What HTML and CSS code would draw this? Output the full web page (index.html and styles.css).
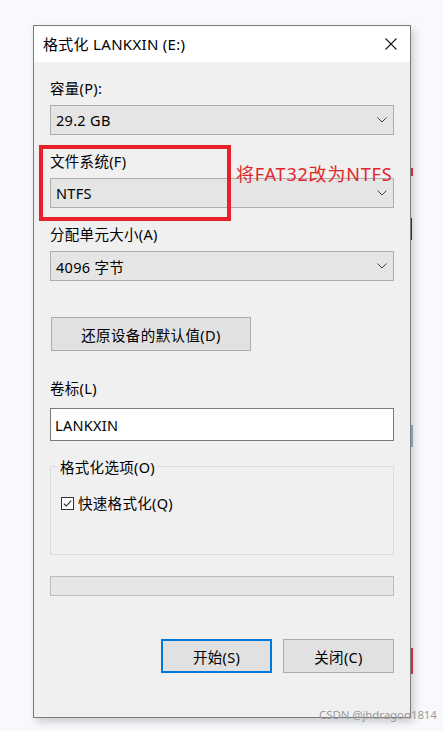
FILE: index.html
```html
<!DOCTYPE html>
<html lang="zh-CN">
<head>
<meta charset="utf-8">
<title>格式化 LANKXIN (E:)</title>
<link rel="stylesheet" href="styles.css">
</head>
<body>
<div class="stage">
  <div class="dialog">
    <div class="titlebar">
      <span class="title">格式化 LANKXIN (E:)</span>
      <svg class="close" width="12" height="12" viewBox="0 0 12 12"><path d="M0.5 0.5 L11.5 11.5 M11.5 0.5 L0.5 11.5" stroke="#1a1a1a" stroke-width="1.1" fill="none"/></svg>
    </div>
    <div class="content">
      <div class="label first">容量(P):</div>
      <div class="select"><span>29.2 GB</span><svg class="chev" width="10" height="6" viewBox="0 0 10 6"><path d="M0.5 0.5 L5 5 L9.5 0.5" stroke="#444" stroke-width="1" fill="none"/></svg></div>

      <div class="label">文件系统(F)</div>
      <div class="select"><span>NTFS</span><svg class="chev" width="10" height="6" viewBox="0 0 10 6"><path d="M0.5 0.5 L5 5 L9.5 0.5" stroke="#444" stroke-width="1" fill="none"/></svg></div>

      <div class="label">分配单元大小(A)</div>
      <div class="select"><span>4096 字节</span><svg class="chev" width="10" height="6" viewBox="0 0 10 6"><path d="M0.5 0.5 L5 5 L9.5 0.5" stroke="#444" stroke-width="1" fill="none"/></svg></div>

      <div class="restore">还原设备的默认值(D)</div>

      <div class="label vol">卷标(L)</div>
      <div class="textbox">LANKXIN</div>

      <div class="group">
        <span class="legend">格式化选项(O)</span>
        <div class="check-row">
          <svg class="checkbox" width="13" height="13" viewBox="0 0 13 13"><rect x="0.5" y="0.5" width="12" height="12" fill="#fff" stroke="#333"/><path d="M2.8 6.6 L5.2 9 L10.2 3.6" stroke="#222" stroke-width="1.1" fill="none"/></svg>
          <span>快速格式化(Q)</span>
        </div>
      </div>

      <div class="progress"></div>

      <div class="buttons">
        <div class="btn primary">开始(S)</div>
        <div class="btn">关闭(C)</div>
      </div>
    </div>

    <div class="redbox"></div>
    <div class="annot">将FAT32改为NTFS</div>
  </div>
  <div class="peek red1"></div>
  <div class="peek dark1"></div>
  <div class="peek dark2"></div>
  <div class="peek red2"></div>
  <div class="watermark">CSDN @jhdragon1814</div>
</div>
</body>
</html>
```

FILE: styles.css
```css
html, body {
  margin: 0;
  padding: 0;
  background: #f8f9fc;
  font-family: "Noto Sans", "Noto Sans CJK SC", sans-serif;
  color: #000;
}

.stage {
  position: relative;
  width: 443px;
  height: 731px;
  padding: 25px 0 0 33px;
  box-sizing: border-box;
}

.dialog {
  position: relative;
  width: 378px;
  height: 693px;
  box-sizing: border-box;
  border: 1px solid #7a7a7a;
  background: #f0f0f0;
  box-shadow: 3px 4px 8px rgba(0, 0, 0, 0.18);
}

.titlebar {
  height: 36px;
  background: #fff;
  display: flex;
  align-items: center;
  justify-content: space-between;
  padding: 0 13px 0 9px;
}

.title {
  font-size: 15px;
  line-height: 20px;
  letter-spacing: 0.3px;
}

.close {
  display: block;
}

.content {
  padding: 0 16px;
  display: flex;
  flex-direction: column;
}

.label {
  font-size: 14.5px;
  line-height: 20px;
  height: 20px;
  margin-top: 16px;
  margin-bottom: 7px;
  letter-spacing: 0.3px;
}

.select {
  height: 30px;
  box-sizing: border-box;
  border: 1px solid #adadad;
  background: #e5e5e5;
  display: flex;
  align-items: center;
  justify-content: space-between;
  padding: 0 6px 0 5px;
  font-size: 14.5px;
  letter-spacing: 0.3px;
}

.restore {
  align-self: flex-start;
  margin-left: 1px;
  margin-top: 36px;
  width: 200px;
  height: 34px;
  box-sizing: border-box;
  border: 1px solid #adadad;
  background: #e1e1e1;
  display: flex;
  align-items: center;
  justify-content: center;
  font-size: 14.5px;
  letter-spacing: 0.4px;
}

.label.vol {
  margin-top: 27px;
  margin-bottom: 10px;
}

.textbox {
  height: 33px;
  box-sizing: border-box;
  border: 1px solid #7a7a7a;
  background: #fff;
  display: flex;
  align-items: center;
  padding: 0 4px;
  font-size: 14.5px;
  letter-spacing: 0.3px;
}

.group {
  position: relative;
  margin-top: 25px;
  height: 89px;
  box-sizing: border-box;
  border: 1px solid #dcdcdc;
}

.legend {
  position: absolute;
  left: 7px;
  top: -10px;
  padding: 0 2px;
  background: #f0f0f0;
  font-size: 14.5px;
  line-height: 20px;
  letter-spacing: 0.3px;
}

.check-row {
  display: flex;
  align-items: center;
  gap: 4px;
  margin: 26px 0 0 10px;
  font-size: 14.5px;
  line-height: 20px;
  letter-spacing: 0.3px;
}

.checkbox {
  display: block;
}

.progress {
  margin-top: 21px;
  height: 20px;
  box-sizing: border-box;
  border: 1px solid #bcbcbc;
  background: #e6e6e6;
}

.buttons {
  margin-top: 43px;
  display: flex;
  justify-content: flex-end;
  gap: 11px;
}

.btn {
  width: 111px;
  height: 34px;
  box-sizing: border-box;
  border: 1px solid #adadad;
  background: #e1e1e1;
  display: flex;
  align-items: center;
  justify-content: center;
  font-size: 14.5px;
  letter-spacing: 0.3px;
}

.btn.primary {
  border: 2px solid #0078d7;
}

.redbox {
  position: absolute;
  left: 5px;
  top: 119px;
  width: 192px;
  height: 76px;
  box-sizing: border-box;
  border: 4px solid #e8202a;
}

.annot {
  position: absolute;
  left: 202px;
  top: 136px;
  font-size: 18px;
  line-height: 24px;
  color: #e3262d;
  letter-spacing: 0.8px;
}

.peek {
  position: absolute;
  left: 411px;
  width: 2px;
}

.red1 { top: 168px; height: 8px; background: #c8323a; }
.dark1 { top: 218px; height: 22px; width: 1px; background: #333; }
.dark2 { top: 425px; height: 22px; width: 2px; background: #8aa0b0; }
.red2 { top: 648px; height: 26px; background: #c8323a; }

.watermark {
  position: absolute;
  left: 319px;
  top: 707px;
  font-family: "Noto Sans", sans-serif;
  font-size: 11.5px;
  line-height: 16px;
  color: #9a9a9a;
  letter-spacing: -0.1px;
}
```
